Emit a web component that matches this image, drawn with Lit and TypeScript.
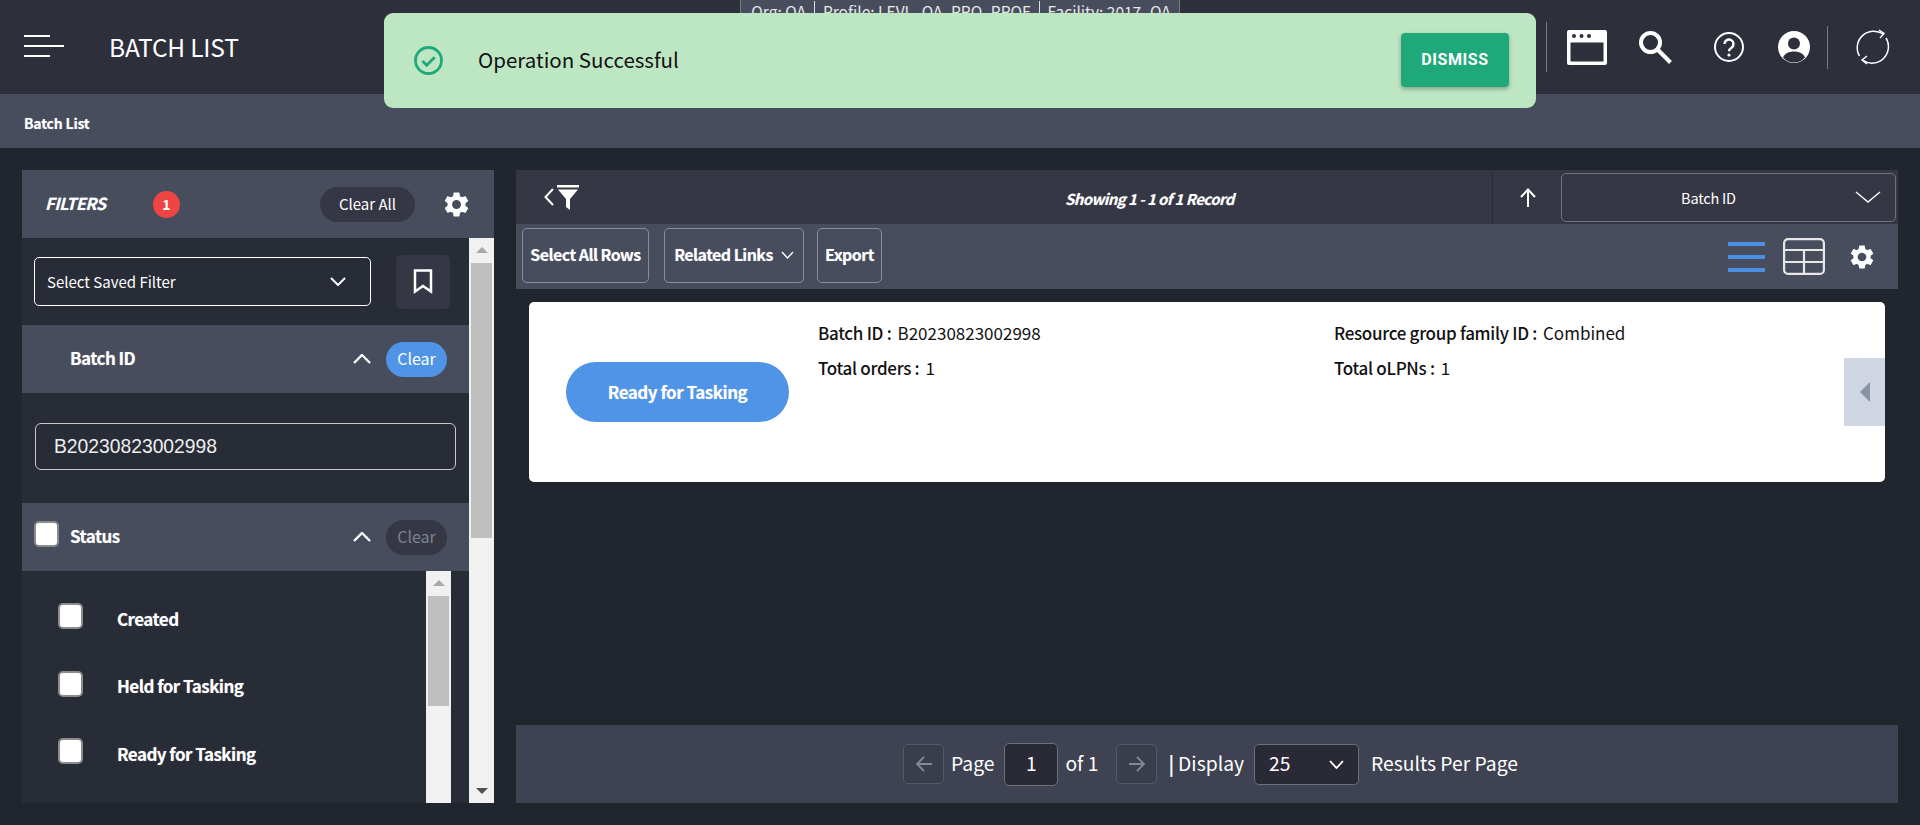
import { LitElement, html, css, svg } from "lit";
import { customElement } from "lit/decorators.js";

const gear = svg`<path fill="#fff" d="M19.14 12.94c.04-.3.06-.61.06-.94 0-.32-.02-.64-.07-.94l2.03-1.58a.49.49 0 0 0 .12-.61l-1.92-3.32a.488.488 0 0 0-.59-.22l-2.39.96c-.5-.38-1.03-.7-1.62-.94l-.36-2.54a.484.484 0 0 0-.48-.41h-3.84c-.24 0-.43.17-.47.41l-.36 2.54c-.59.24-1.13.57-1.62.94l-2.39-.96c-.22-.08-.47 0-.59.22L2.74 8.87c-.12.21-.08.47.12.61l2.03 1.58c-.05.3-.09.63-.09.94s.02.64.07.94l-2.03 1.58a.49.49 0 0 0-.12.61l1.92 3.32c.12.22.37.29.59.22l2.39-.96c.5.38 1.03.7 1.62.94l.36 2.54c.05.24.24.41.48.41h3.84c.24 0 .44-.17.47-.41l.36-2.54c.59-.24 1.13-.56 1.62-.94l2.39.96c.22.08.47 0 .59-.22l1.92-3.32c.12-.22.07-.47-.12-.61l-2.01-1.58zM12 15.6c-1.98 0-3.6-1.62-3.6-3.6s1.62-3.6 3.6-3.6 3.6 1.62 3.6 3.6-1.62 3.6-3.6 3.6z"/>`;

const chev = (w: number, h: number, up = false, sw = 2) => html`<svg width=${w} height=${h} viewBox="0 0 ${w} ${h}" fill="none" stroke="#fff" stroke-width=${sw}>
  <path d=${up ? `M1 ${h - 1}L${w / 2} 1L${w - 1} ${h - 1}` : `M1 1L${w / 2} ${h - 1}L${w - 1} 1`} /></svg>`;

@customElement("app-root")
export class AppRoot extends LitElement {
  static styles = css`
    :host { display: block; position: relative; width: 100%; height: 825px; overflow: hidden; background: #21252e; color: #fff;
      font-family: "Noto Sans CJK SC", "Noto Sans", sans-serif; font-size: 16px; line-height: 1.2; }
    * { box-sizing: border-box; }
    svg { display: block; flex: none; }
    .topbar { height: 94px; background: #2d2f3b; display: flex; align-items: center; padding-left: 24px; }
    .title { margin-left: 45px; font-size: 24.5px; letter-spacing: -0.2px; }
    .actions { margin-left: auto; display: flex; align-items: center; }
    .vr { width: 1px; background: #777b86; }
    .vr.a { height: 50px; margin-right: 20px; }
    .vr.b { height: 43px; margin: 0 27px 0 17px; }
    .ic-window { margin-right: 32px; }
    .ic-search { margin-right: 42px; }
    .ic-help { margin-right: 34px; }
    .ic-refresh { margin-right: 29px; }
    .crumbs { height: 54px; background: #484d5d; display: flex; align-items: center; padding: 4px 0 0 24px; font-size: 14px; font-weight: 700; letter-spacing: -0.2px; text-shadow: 0 0 1px rgba(255,255,255,.45); }
    .org { position: absolute; top: 0; left: 740px; width: 440px; height: 30px; background: #484d5d; border: 1px solid #777b86; border-top: 0;
      display: flex; justify-content: center; align-items: flex-start; padding: 1px 0 0 2px; font-size: 15.500px; color: #e8e8e8; white-space: nowrap; }
    .org span { padding: 0 8px; border-left: 1px solid #ddd; line-height: 20px; }
    .org span:first-child { border-left: 0; }
    .toast { position: absolute; left: 384px; top: 13px; width: 1152px; height: 95px; background: #bde6c3; border-radius: 9px; display: flex; align-items: center;
      padding: 0 27px 0 30px; color: #111; font-size: 20.500px; }
    .toast .msg { margin-left: 35px; margin-top: -2px; }
    .dismiss { margin-left: auto; margin-top: -2px; width: 108px; height: 54px; background: #1fa97a; border-radius: 4px; display: flex; align-items: center; justify-content: center;
      color: #fff; font: 700 16px "Roboto", sans-serif; letter-spacing: 0.6px; box-shadow: 0 2px 4px rgba(0,0,0,.3); }
    .body { display: flex; gap: 22px; height: 677px; padding: 22px; }
    .filters { width: 472px; flex: none; display: grid; grid-template-columns: 447px 25px; grid-template-rows: 68px 1fr; background: #282c36; overflow: hidden; }
    .fhead { grid-column: 1 / 3; background: #484d5d; display: flex; align-items: center; padding-left: 23px; }
    .fhead b { font-style: italic; font-size: 16.500px; letter-spacing: -0.5px; width: 108px; text-shadow: 0 0 1px rgba(255,255,255,.45); }
    .badge { width: 27px; height: 27px; border-radius: 50%; background: #ef4444; display: flex; align-items: center; justify-content: center; font-size: 14px; font-weight: 700; }
    .pill { border-radius: 18px; display: flex; align-items: center; justify-content: center; font-size: 15px; background: #353844; flex: none; }
    .clearall { width: 95px; height: 35px; margin-left: 140px; }
    .fhead svg { margin-left: 29px; }
    .fbody { overflow: hidden; min-width: 0; }
    .saved { display: flex; padding: 0 19px 0 12px; align-items: center; justify-content: space-between; height: 87px; }
    .sel { width: 337px; height: 49px; border: 1px solid #fff; border-radius: 5px; display: flex; align-items: center; justify-content: space-between; padding: 0 24px 0 12px; font-size: 15px; }
    .bm { width: 54px; height: 54px; background: #353844; border-radius: 5px; display: flex; align-items: center; justify-content: center; }
    .sect { height: 68px; background: #484d5d; display: flex; align-items: center; font-size: 17px; font-weight: 700; letter-spacing: -0.55px; padding-left: 48px; position: relative; }
    .sect .lbl { margin-top: -2px; text-shadow: 0 0 1px rgba(255,255,255,.45); }
    .sect .chevron { margin-left: auto; margin-right: 15px; }
    .sect .pill { width: 61px; height: 35px; margin-right: 22px; font-weight: 400; letter-spacing: 0; font-size: 16px; }
    .pill.blue { background: #4f94e6; }
    .pill.dim { background: #353844; color: #7d8290; }
    .cb { width: 25px; height: 26px; background: #fff; border: 2px solid #8b8b8b; border-radius: 5px; flex: none; }
    .sect .cb { position: absolute; left: 12px; top: 18px; }
    .inputwrap { height: 110px; padding: 30px 13px 0; }
    .input { height: 47px; border: 1px solid #c8c8c8; border-radius: 6px; display: flex; align-items: center; padding: 1px 0 0 18px; font: 19.300px "Liberation Sans", sans-serif; color: #eee; }
    .statuswrap { display: grid; grid-template-columns: 404px 25px; height: 232px; }
    .items { padding: 31px 0 0 36px; }
    .item { display: flex; align-items: center; height: 67.500px; font-size: 17px; font-weight: 700; letter-spacing: -0.55px; text-shadow: 0 0 1px rgba(255,255,255,.45); }
    .item .cb { margin-right: 34px; margin-top: -39px; }
    .item span { margin-top: -34px; }
    .sb { background: #f1f1f1; position: relative; }
    .sb i { position: absolute; left: 2px; right: 2px; background: #bfbfbf; display: block; }
    .sb .up, .sb .dn { position: absolute; left: 50%; margin-left: -6px; width: 0; height: 0; border-left: 6px solid transparent; border-right: 6px solid transparent; }
    .sb .up { top: 9px; border-bottom: 6px solid #a8a8a8; }
    .sb .dn { bottom: 9px; border-top: 6px solid #505050; }
    .main { flex: 1; display: flex; flex-direction: column; min-width: 0; }
    .bar1 { height: 54px; background: #353844; display: flex; align-items: center; }
    .back { display: flex; align-items: center; margin-left: 28px; gap: 3px; width: 521px; }
    .showing { font-style: italic; font-weight: 700; font-size: 15px; letter-spacing: -0.58px; width: 427px; text-align: left; margin-top: 4px; text-shadow: 0 0 1px rgba(255,255,255,.45); }
    .sep { width: 1px; height: 52px; background: #282b34; }
    .arrowup { margin-left: 26px; margin-right: 24px; margin-top: 1px; }
    .sortsel { width: 335px; height: 49px; margin-right: 2px; border: 1px solid #6f727b; border-radius: 5px; display: flex; align-items: center; justify-content: center; position: relative; font-size: 14.500px; letter-spacing: -0.2px; padding-right: 40px; padding-top: 1px; }
    .sortsel svg { position: absolute; right: 14px; top: 17px; }
    .bar2 { height: 65px; background: #484d5d; display: flex; align-items: center; padding: 0 24px 0 6px; }
    .btn { height: 55px; margin-top: -2px; border: 1px solid #8a8e99; border-radius: 5px; display: flex; align-items: center; justify-content: center; font-size: 16px; font-weight: 700; letter-spacing: -0.55px; gap: 8px; padding-bottom: 2px; text-shadow: 0 0 1px rgba(255,255,255,.45); }
    .b1 { width: 127px; margin-right: 15px; } .b2 { width: 140px; margin-right: 13px; } .b3 { width: 65px; }
    .views { margin-left: auto; display: flex; align-items: center; }
    .lines { width: 37px; height: 30px; display: flex; flex-direction: column; justify-content: space-between; margin-right: 18px; }
    .lines i { display: block; height: 4px; background: #4a8fe2; }
    .tbl { margin-right: 25px; }
    .list { flex: 1; padding: 13px 13px 0; }
    .card { height: 180px; background: #fff; border-radius: 5px; position: relative; color: #111; display: flex; }
    .status { margin: 60px 29px 0 37px; width: 223px; height: 60px; border-radius: 30px; background: #4f94e6; color: #fff; font-size: 17px; font-weight: 700; letter-spacing: -0.5px; display: flex; align-items: center; justify-content: center; flex: none; text-shadow: 0 0 1px rgba(255,255,255,.45); }
    .fields { display: grid; grid-template-columns: 516px 1fr; grid-auto-rows: 35px; padding-top: 14px; font-size: 17px; flex: 1; }
    .fields b { font-weight: 500; letter-spacing: -0.3px; margin-right: 6px; }
    .fields div { display: flex; align-items: center; height: 35px; white-space: pre; }
    .tab { position: absolute; right: 0; top: 56px; width: 41px; height: 68px; background: #cfd5e1; display: flex; align-items: center; justify-content: center; }
    .tab i { width: 0; height: 0; border-top: 10px solid transparent; border-bottom: 10px solid transparent; border-right: 10px solid #8a93a5; }
    .pager { height: 78px; background: #3e4252; display: flex; align-items: center; padding-left: 387px; font-size: 19.300px; }
    .pbtn { width: 41px; height: 40px; border: 1px solid #555966; border-radius: 5px; background: #3a3d4b; display: flex; align-items: center; justify-content: center; }
    .pg { margin: 0 9px 0 7px; }
    .pinput { width: 54px; height: 43px; margin-left: 1px; border: 1px solid #6c6e78; border-radius: 5px; background: #2a2936; display: flex; align-items: center; justify-content: center; }
    .of { margin: 0 18px 0 7px; }
    .disp { margin-left: 11px; }
    .disp b { font-weight: 700; margin-right: 4px; }
    .psel { width: 105px; height: 41px; margin: 0 12px 0 10px; border: 1px solid #6c6e78; border-radius: 5px; background: #2a2936; display: flex; align-items: center; justify-content: space-between; padding: 0 14px 0 14px; }
  `;

  render() {
    const item = (t: string) => html`<div class="item"><div class="cb"></div><span>${t}</span></div>`;
    return html`
      <div class="topbar">
        <svg width="40" height="24" viewBox="0 0 40 24" fill="#fff"><rect y="0" width="26" height="2"/><rect y="10" width="40" height="2"/><rect y="20" width="26" height="2"/></svg>
        <div class="title">BATCH LIST</div>
        <div class="actions">
          <div class="vr a"></div>
          <svg class="ic-window" width="40" height="35" viewBox="0 0 40 35"><rect width="40" height="35" rx="2" fill="#fff"/><rect x="3.5" y="12.5" width="33" height="19" fill="#2d2f3b"/><circle cx="7" cy="6" r="2" fill="#2d2f3b"/><circle cx="14.5" cy="6" r="2" fill="#2d2f3b"/><circle cx="22" cy="6" r="2" fill="#2d2f3b"/></svg>
          <svg class="ic-search" width="33" height="33" viewBox="0 0 33 33" fill="none" stroke="#fff" stroke-width="4"><circle cx="11.5" cy="11.5" r="9.5"/><path d="M18.5 18.5L31.5 31.5"/></svg>
          <svg class="ic-help" width="30" height="30" viewBox="0 0 30 30" fill="none" stroke="#fff"><circle cx="15" cy="15" r="14" stroke-width="2"/><path stroke-width="2.4" d="M10.5 12a4.5 4.5 0 1 1 7 3.7c-1.6 1-2.5 1.8-2.5 3.6"/><circle cx="15" cy="23" r="1.6" fill="#fff" stroke="none"/></svg>
          <svg width="32" height="32" viewBox="0 0 32 32"><circle cx="16" cy="16" r="16" fill="#fff"/><circle cx="16" cy="12.5" r="6" fill="#2d2f3b"/><path fill="#2d2f3b" d="M5 26.5c1.5-4 6-6 11-6s9.500 2 11 6a14.500 14.500 0 0 1-22 0z"/></svg>
          <div class="vr b"></div>
          <svg class="ic-refresh" width="36" height="36" viewBox="0 0 36 36" fill="none" stroke="#fff" stroke-width="1.5"><path d="M4.500 27A16.500 16.500 0 0 1 28 5"/><path d="M24 1L29 4.500L25 9"/><path d="M31 9A16.500 16.500 0 0 1 8 31.500"/><path d="M12 27L7 31L12 35"/></svg>
        </div>
      </div>
      <div class="crumbs">Batch List</div>
      <div class="org"><span>Org: QA</span><span>Profile: LEVL_QA_PRO_PROF</span><span>Facility: 2017_QA</span></div>
      <div class="toast">
        <svg width="29" height="29" viewBox="0 0 29 29" fill="none" stroke="#1fa97a" stroke-width="2.800"><circle cx="14.500" cy="14.500" r="13"/><path d="M8.500 15l4.200 4.200 8-8"/></svg>
        <div class="msg">Operation Successful</div>
        <div class="dismiss">DISMISS</div>
      </div>
      <div class="body">
        <div class="filters">
          <div class="fhead">
            <b>FILTERS</b><div class="badge">1</div><div class="pill clearall">Clear All</div>
            <svg width="25" height="25" viewBox="2.500 2 19 20">${gear}</svg>
          </div>
          <div class="fbody">
            <div class="saved">
              <div class="sel">Select Saved Filter ${chev(16, 9)}</div>
              <div class="bm"><svg width="20" height="25" viewBox="0 0 20 25" fill="none" stroke="#fff" stroke-width="2.500"><path d="M2 1.500H18V22.500L10 17L2 22.500Z"/></svg></div>
            </div>
            <div class="sect"><span class="lbl">Batch ID</span> <span class="chevron">${chev(18, 10, true, 2.4)}</span><div class="pill blue">Clear</div></div>
            <div class="inputwrap"><div class="input">B20230823002998</div></div>
            <div class="sect"><div class="cb"></div><span class="lbl">Status</span> <span class="chevron">${chev(18, 10, true, 2.4)}</span><div class="pill dim">Clear</div></div>
            <div class="statuswrap">
              <div class="items">${item("Created")}${item("Held for Tasking")}${item("Ready for Tasking")}</div>
              <div class="sb"><span class="up"></span><i style="top:25px;height:110px"></i></div>
            </div>
          </div>
          <div class="sb"><span class="up"></span><i style="top:25px;height:275px"></i><span class="dn"></span></div>
        </div>
        <div class="main">
          <div class="bar1">
            <div class="back">
              <svg width="10" height="18" viewBox="0 0 10 18" fill="none" stroke="#fff" stroke-width="2"><path d="M9 1L1.500 9L9 17"/></svg>
              <svg width="22" height="25" viewBox="0 0 22 25" fill="#fff"><rect width="22" height="2.500"/><path d="M1 4.500H21L13 14V25L9 22V14Z"/></svg>
            </div>
            <div class="showing">Showing 1 - 1 of 1 Record</div>
            <div class="sep"></div>
            <svg class="arrowup" width="18" height="19" viewBox="0 0 18 19" fill="none" stroke="#fff" stroke-width="2"><path d="M9 19V2M2 9L9 1.500L16 9"/></svg>
            <div class="sortsel">Batch ID <svg width="26" height="12" viewBox="0 0 26 12" fill="none" stroke="#fff" stroke-width="1.400"><path d="M1 1L13 11L25 1"/></svg></div>
          </div>
          <div class="bar2">
            <div class="btn b1">Select All Rows</div>
            <div class="btn b2">Related Links ${chev(13, 8, false, 1.400)}</div>
            <div class="btn b3">Export</div>
            <div class="views">
              <div class="lines"><i></i><i></i><i></i></div>
              <svg class="tbl" width="42" height="37" viewBox="0 0 42 37" fill="none" stroke="#e8e8e8" stroke-width="2.200"><rect x="1.100" y="1.100" width="39.800" height="34.800" rx="4"/><path d="M1 12H41M1 24H41M21 12V36"/></svg>
              <svg width="24" height="24" viewBox="2.500 2 19 20">${gear}</svg>
            </div>
          </div>
          <div class="list">
            <div class="card">
              <div class="status">Ready for Tasking</div>
              <div class="fields">
                <div><b>Batch ID :</b>B20230823002998</div>
                <div><b>Resource group family ID :</b>Combined</div>
                <div><b>Total orders :</b>1</div>
                <div><b>Total oLPNs :</b>1</div>
              </div>
              <div class="tab"><i></i></div>
            </div>
          </div>
          <div class="pager">
            <div class="pbtn"><svg width="18" height="16" viewBox="0 0 18 16" fill="none" stroke="#858994" stroke-width="1.800"><path d="M17 8H2M9 1L2 8L9 15"/></svg></div>
            <span class="pg">Page</span>
            <div class="pinput">1</div>
            <span class="of">of 1</span>
            <div class="pbtn"><svg width="18" height="16" viewBox="0 0 18 16" fill="none" stroke="#858994" stroke-width="1.800"><path d="M1 8H16M9 1L16 8L9 15"/></svg></div>
            <span class="disp"><b>|</b>Display</span>
            <div class="psel">25 ${chev(15, 9, false, 1.800)}</div>
            <span>Results Per Page</span>
          </div>
        </div>
      </div>
    `;
  }
}
